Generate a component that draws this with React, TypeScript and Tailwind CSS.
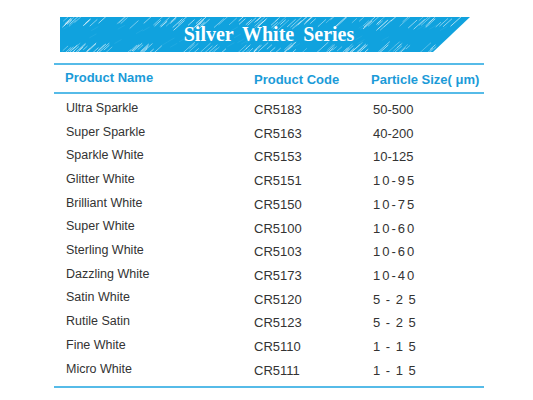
const rows = [
  { name: 'Ultra Sparkle', code: 'CR5183', size: '50-500', wide: false },
  { name: 'Super Sparkle', code: 'CR5163', size: '40-200', wide: false },
  { name: 'Sparkle White', code: 'CR5153', size: '10-125', wide: false },
  { name: 'Glitter White', code: 'CR5151', size: '10-95', wide: true },
  { name: 'Brilliant White', code: 'CR5150', size: '10-75', wide: true },
  { name: 'Super White', code: 'CR5100', size: '10-60', wide: true },
  { name: 'Sterling White', code: 'CR5103', size: '10-60', wide: true },
  { name: 'Dazzling White', code: 'CR5173', size: '10-40', wide: true },
  { name: 'Satin White', code: 'CR5120', size: '5 - 2 5', wide: false },
  { name: 'Rutile Satin', code: 'CR5123', size: '5 - 2 5', wide: false },
  { name: 'Fine White', code: 'CR5110', size: '1 - 1 5', wide: false },
  { name: 'Micro White', code: 'CR5111', size: '1 - 1 5', wide: false },
];

// little seeded random so the brush texture stays the same every render
function rand(seed: number) {
  const x = Math.sin(seed * 9301 + 49297) * 233280;
  return x - Math.floor(x);
}

function BrushBanner() {
  const strokes = [];
  for (let i = 0; i < 200; i++) {
    const top = i % 2 === 0;
    const x = rand(i) * 405;
    const y = top ? rand(i + 500) * 7 : 28 + rand(i + 900) * 7;
    const len = 4 + rand(i + 1300) * 8;
    strokes.push(
      <line
        key={i}
        x1={x}
        y1={y + len * 0.6}
        x2={x + len}
        y2={y - len * 0.3}
        stroke="#ffffff"
        strokeOpacity={0.35 + rand(i + 77) * 0.45}
        strokeWidth={0.8}
      />,
    );
  }
  const inner = [];
  for (let i = 0; i < 40; i++) {
    const x = rand(i + 2000) * 380;
    const y = 6 + rand(i + 2100) * 22;
    inner.push(
      <line
        key={i}
        x1={x}
        y1={y + 3}
        x2={x + 7}
        y2={y - 1}
        stroke="#3db4e6"
        strokeOpacity={0.5}
        strokeWidth={0.7}
      />,
    );
  }
  return (
    <div className="relative ml-[60px] w-[410px] h-[35px]">
      <svg className="absolute inset-0" width="410" height="35" viewBox="0 0 410 35">
        <defs>
          <clipPath id="band">
            <polygon points="0,0 410,0 373,35 0,35" />
          </clipPath>
        </defs>
        <g clipPath="url(#band)">
          <rect x="0" y="0" width="410" height="35" fill="#10a2de" />
          {inner}
          {strokes}
        </g>
      </svg>
      <div className="relative flex h-full items-center justify-center pl-[8px] pb-[1px]">
        <span className="font-['Liberation_Serif',serif] text-[20px] font-bold text-white [word-spacing:4px]">
          Silver White Series
        </span>
      </div>
    </div>
  );
}

export default function App() {
  return (
    <div className="w-[533px] h-[400px] bg-white pt-[17px] font-['Liberation_Sans',Arial,sans-serif]">
      <BrushBanner />

      <div className="ml-[54px] w-[430px] mt-[11px]">
        <div className="h-[2px] bg-[#56bbe8]" />

        {/* Header */}
        <div className="flex h-[27px] items-center text-[13px] font-bold text-[#1b9bd8]">
          <span className="w-[200px] pl-[11px] mb-[1px]">Product Name</span>
          <span className="w-[117px] mt-[2px]">Product Code</span>
          <span className="mt-[2px]">Particle Size( μm)</span>
        </div>

        <div className="h-[2px] bg-[#56bbe8]" />

        {/* Rows */}
        <div className="pt-[4px]">
          {rows.map((r) => (
            <div key={r.code} className="flex h-[23.7px] items-center text-[#333333]">
              <span className="w-[200px] pl-[12px] mb-[3px] text-[12.5px]">{r.name}</span>
              <span className="w-[119px] text-[13px]">{r.code}</span>
              <span
                className={
                  r.wide
                    ? 'text-[13px] tracking-[2px]'
                    : r.size.includes(' ')
                      ? 'text-[13px] tracking-[1px]'
                      : 'text-[13px]'
                }
              >
                {r.size}
              </span>
            </div>
          ))}
        </div>

        <div className="mt-[4px] h-[2px] bg-[#56bbe8]" />
      </div>
    </div>
  );
}
